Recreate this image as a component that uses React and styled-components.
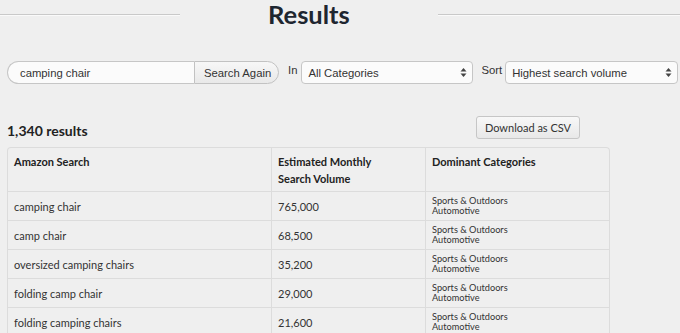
import React from "react";
import styled, { createGlobalStyle } from "styled-components";

const Global = createGlobalStyle`
  html, body { margin: 0; padding: 0; }
  body {
    background: #efefef;
    font-family: Lato, "Open Sans", sans-serif;
    color: #333;
    width: 680px;
    height: 333px;
    overflow: hidden;
  }
`;

const Page = styled.div`
  display: flex;
  flex-direction: column;
`;

const Header = styled.div`
  display: flex;
  align-items: center;
  height: 28px;
`;

const Rule = styled.div`
  height: 1px;
  background: #c9c9c9;
  box-shadow: 0 1px 0 #fafafa;
  width: ${(p) => (p.$grow ? "auto" : p.$w + "px")};
  flex: ${(p) => (p.$grow ? "1" : "none")};
`;

const Title = styled.h1`
  margin: 0 88px;
  font-family: Lato, sans-serif;
  font-weight: 700;
  font-size: 25.5px;
  line-height: 28px;
  color: #1e2630;
`;

const FormRow = styled.div`
  display: flex;
  align-items: flex-start;
  margin-top: 33px;
  padding-left: 7px;
  font-family: "Liberation Sans", Arial, sans-serif;
  font-size: 11.3px;
  color: #333;
`;

const SearchGroup = styled.div`
  display: flex;
  height: 23px;
`;

const SearchInput = styled.div`
  box-sizing: border-box;
  width: 187px;
  height: 23px;
  border: 1px solid #c6c6c6;
  border-right: none;
  border-radius: 12px 0 0 12px;
  background: #fbfbfb;
  padding-left: 12px;
  display: flex;
  align-items: center;
  color: #333;
`;

const SearchButton = styled.div`
  box-sizing: border-box;
  width: 85px;
  height: 23px;
  border: 1px solid #c2c2c2;
  border-radius: 0 12px 12px 0;
  background: linear-gradient(#f7f7f7, #e9e9e9);
  display: flex;
  align-items: center;
  padding-left: 9px;
  color: #333;
`;

const Label = styled.span`
  margin-left: ${(p) => p.$ml}px;
  margin-right: ${(p) => p.$mr}px;
  margin-top: 3px;
  color: #333;
`;

const Select = styled.div`
  box-sizing: border-box;
  width: ${(p) => p.$w}px;
  height: 23px;
  border: 1px solid #c6c6c6;
  border-radius: 4px;
  background: #fbfbfb;
  display: flex;
  align-items: center;
  justify-content: space-between;
  padding: 0 5px 0 6px;
  color: #333;
`;

const Arrows = () => (
  <svg width="7" height="11" viewBox="0 0 7 11">
    <path d="M3.5 1 L6.5 4.5 L0.5 4.5 Z" fill="#444" />
    <path d="M3.5 10 L6.5 6.5 L0.5 6.5 Z" fill="#444" />
  </svg>
);

const ResultsBar = styled.div`
  display: flex;
  align-items: flex-start;
  justify-content: space-between;
  margin-top: 32px;
  padding-left: 7px;
  width: 573px;
`;

const Count = styled.div`
  font-size: 14px;
  line-height: 16px;
  font-weight: 700;
  color: #222;
  margin-top: 7px;
`;

const CsvButton = styled.div`
  box-sizing: border-box;
  height: 23px;
  width: 104px;
  border: 1px solid #c6c6c6;
  border-radius: 3px;
  background: linear-gradient(#f8f8f8, #e8e8e8);
  display: flex;
  align-items: center;
  justify-content: center;
  font-size: 11px;
  color: #333;
`;

const Table = styled.div`
  margin-top: 8px;
  margin-left: 7px;
  width: 603px;
  box-sizing: border-box;
  border: 1px solid #dcdcdc;
  border-bottom: none;
  border-radius: 4px 4px 0 0;
  display: grid;
  grid-template-columns: 263px 154px 1fr;
`;

const Cell = styled.div`
  box-sizing: border-box;
  border-left: ${(p) => (p.$first ? "none" : "1px solid #dcdcdc")};
  border-bottom: 1px solid #dcdcdc;
  padding: ${(p) => (p.$head ? "5px 6px 0 6px" : "0 6px")};
  height: ${(p) => (p.$head ? "44px" : "29px")};
  display: flex;
  flex-direction: column;
  justify-content: ${(p) => (p.$head ? "flex-start" : "center")};
  font-size: 11px;
  line-height: 17px;
  font-weight: ${(p) => (p.$head ? 700 : 400)};
  color: ${(p) => (p.$head ? "#222" : "#333")};
`;

const Cat = styled.div`
  font-size: 9.2px;
  line-height: 10px;
  color: #333;
`;

const rows = [
  ["camping chair", "765,000"],
  ["camp chair", "68,500"],
  ["oversized camping chairs", "35,200"],
  ["folding camp chair", "29,000"],
  ["folding camping chairs", "21,600"],
];

export default function App() {
  return (
    <Page>
      <Global />
      <Header>
        <Rule $w={180} />
        <Title>Results</Title>
        <Rule $grow />
      </Header>
      <FormRow>
        <SearchGroup>
          <SearchInput>camping chair</SearchInput>
          <SearchButton>Search Again</SearchButton>
        </SearchGroup>
        <Label $ml={9} $mr={4}>In</Label>
        <Select $w={172}>
          <span>All Categories</span>
          <Arrows />
        </Select>
        <Label $ml={8} $mr={3}>Sort</Label>
        <Select $w={173}>
          <span>Highest search volume</span>
          <Arrows />
        </Select>
      </FormRow>
      <ResultsBar>
        <Count>1,340 results</Count>
        <CsvButton>Download as CSV</CsvButton>
      </ResultsBar>
      <Table>
        <Cell $head $first>Amazon Search</Cell>
        <Cell $head>Estimated Monthly<br />Search Volume</Cell>
        <Cell $head>Dominant Categories</Cell>
        {rows.map(([q, v]) => (
          <React.Fragment key={q}>
            <Cell $first>{q}</Cell>
            <Cell>{v}</Cell>
            <Cell>
              <Cat>Sports &amp; Outdoors</Cat>
              <Cat>Automotive</Cat>
            </Cell>
          </React.Fragment>
        ))}
      </Table>
    </Page>
  );
}
